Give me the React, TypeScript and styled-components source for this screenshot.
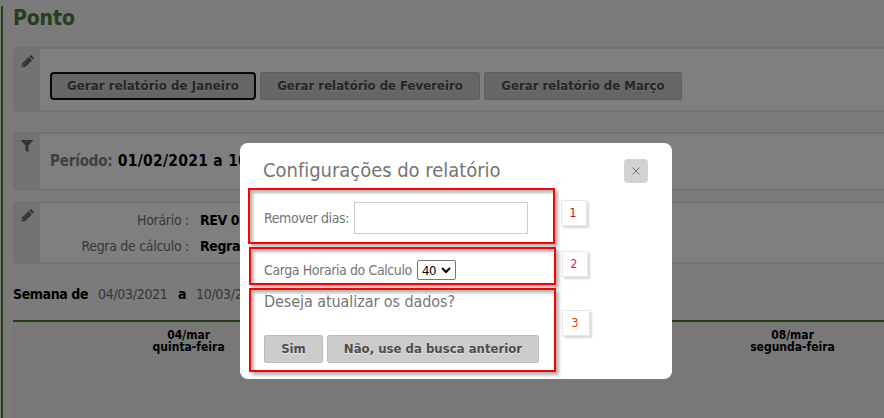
import React from 'react';
import styled, { createGlobalStyle } from 'styled-components';
import { FaFilter } from 'react-icons/fa';

const GlobalStyle = createGlobalStyle`
  * { box-sizing: border-box; }
  html, body { margin: 0; height: 100%; overflow: hidden; }
  body {
    font-family: Tahoma, "DejaVu Sans Condensed", "DejaVu Sans", sans-serif;
    font-stretch: condensed;
    background: #f6f6f6;
  }
`;

const Screen = styled.div`
  position: relative;
  width: 884px;
  height: 418px;
  overflow: hidden;
  padding: 6px 0 0 1px;
`;

const Page = styled.main`
  height: 412px;
  border-left: 2px solid #4c7c3c;
  padding-left: 10px;
`;

const Title = styled.h1`
  margin: 0;
  height: 41px;
  font-size: 21px;
  line-height: 24px;
  letter-spacing: -0.1px;
  color: #4c7c3c;
`;

const Panel = styled.section<{ $height: number; $gap: number }>`
  display: flex;
  height: ${(p) => p.$height}px;
  margin-bottom: ${(p) => p.$gap}px;
  border: 2px solid #e4e4e4;
  border-right: 0;
  border-radius: 4px 0 0 4px;
  background: #fff;
`;

const PanelSide = styled.div`
  width: 25px;
  padding: 6px 0 0 6px;
  background: #e4e4e4;
  color: #686868;
  svg { display: block; }
`;

const ButtonRow = styled.div`
  display: flex;
  gap: 4px;
  padding: 23px 0 0 10px;
`;

const Button = styled.button<{ $width: number; $focused?: boolean }>`
  width: ${(p) => p.$width}px;
  height: 28px;
  padding: 0 0 1px;
  border: ${(p) => (p.$focused ? '2px solid #101010' : '1px solid #bdbdbd')};
  border-radius: ${(p) => (p.$focused ? 4 : 2)}px;
  background: #ccc;
  color: #4d4d4d;
  font: bold 13px "DejaVu Sans Condensed", "DejaVu Sans", sans-serif;
  font-stretch: condensed;
  letter-spacing: ${(p) => (p.$focused ? 0.12 : 0.02)}px;
  text-shadow: 0 1px 0 #e6e6e6;
  white-space: nowrap;
`;

const Period = styled.div`
  padding: 16px 0 0 10px;
  font-size: 15.5px;
  line-height: 22px;
  font-weight: bold;
  white-space: nowrap;
  letter-spacing: 0.27px;
  color: #000;
  span { color: #808080; font-size: 15px; letter-spacing: -0.17px; }
`;

const Facts = styled.dl`
  display: grid;
  grid-template-columns: 149px 200px;
  column-gap: 11px;
  grid-auto-rows: 26px;
  margin: 4px 0 0;
  font-size: 14px;
  line-height: 26px;
  letter-spacing: -0.3px;
  dt { text-align: right; color: #707070; }
  dd { margin: 0; font-weight: bold; color: #000; letter-spacing: -0.4px; }
`;

const Week = styled.div`
  display: flex;
  height: 40px;
  margin-top: 16px;
  font-size: 14px;
  line-height: 28px;
  letter-spacing: -0.3px;
  color: #707070;
  white-space: nowrap;
  b { color: #000; }
  b:first-child { width: 85px; letter-spacing: -0.4px; }
  span { width: 80px; }
  b:nth-child(3) { width: 18px; }
`;

const Days = styled.div`
  display: grid;
  grid-template-columns: 75px repeat(4, 201.3px);
  height: 98px;
  padding-top: 7px;
  border-top: 2px solid #4c7c3c;
  background: #f0f0f0;
`;

const Day = styled.div`
  font-size: 12px;
  line-height: 12px;
  font-weight: bold;
  text-align: center;
  color: #000;
`;

const Overlay = styled.div`
  position: absolute;
  inset: 0;
  background: rgba(0, 0, 0, 0.5);
`;

const Dialog = styled.div`
  position: absolute;
  left: 240px;
  top: 143px;
  width: 432px;
  height: 236px;
  padding: 16px 24px 0;
  border-radius: 8px;
  background: #fff;
  color: #757575;
`;

const DialogHead = styled.header`
  display: flex;
  justify-content: space-between;
  height: 43px;
`;

const DialogTitle = styled.h2`
  margin: -1px 0 0 -1px;
  font-size: 20px;
  line-height: 24px;
  font-weight: normal;
  letter-spacing: -0.03px;
`;

const Close = styled.button`
  display: flex;
  align-items: center;
  justify-content: center;
  width: 24px;
  height: 24px;
  padding: 0;
  border: 0;
  border-radius: 4px;
  background: #d3d3d3;
`;

const Field = styled.label<{ $height: number; $gap: number }>`
  display: flex;
  align-items: center;
  gap: ${(p) => p.$gap}px;
  height: ${(p) => p.$height}px;
  font-size: 14px;
  letter-spacing: -0.4px;
  white-space: nowrap;
  span { flex: none; }
`;

const Label = styled.span<{ $width: number }>`
  width: ${(p) => p.$width}px;
`;

const TextInput = styled.input`
  width: 174px;
  height: 32px;
  border: 1px solid #ccc;
  background: #fff;
`;

const Select = styled.div`
  display: flex;
  align-items: center;
  justify-content: space-between;
  width: 39px;
  height: 20px;
  padding: 0 4px;
  border: 1px solid #767676;
  border-radius: 2px;
  font-size: 13px;
  color: #000;
`;

const Question = styled.p`
  margin: -14px 0 0;
  height: 43px;
  font-size: 16px;
  line-height: 20px;
  letter-spacing: -0.07px;
`;

const Actions = styled.div`
  display: flex;
  gap: 4px;
`;

const Highlight = styled.div<{ $x: number; $y: number; $height: number }>`
  position: absolute;
  left: ${(p) => p.$x}px;
  top: ${(p) => p.$y}px;
  width: 307px;
  height: ${(p) => p.$height}px;
  border: 2px solid #f00;
  box-shadow: 3px 3px 3px rgba(0, 0, 0, 0.3), inset 3px 3px 3px rgba(0, 0, 0, 0.28);
`;

const Marker = styled.div<{ $x: number; $y: number; $width?: number; $color: string }>`
  position: absolute;
  left: ${(p) => p.$x}px;
  top: ${(p) => p.$y}px;
  width: ${(p) => p.$width ?? 26}px;
  height: 26px;
  padding-right: 2px;
  border: 1px solid #e8e8e8;
  background: #fff;
  box-shadow: 2px 2px 2px #d8d8d8;
  color: ${(p) => p.$color};
  font-size: 12px;
  line-height: 24px;
  text-align: center;
`;

const Pencil = () => (
  <svg width="13" height="13" viewBox="0 0 13 13" fill="currentColor">
    <path d="M7.6 1.9 11 5.3 4.3 12 .9 12.3Q.5 12.3.6 11.8L1 8.5Z" />
    <path d="M8.3 1.2 9 .5Q9.8-.1 10.6.6L12.3 2.3Q13 3.1 12.4 3.9L11.7 4.6Z" />
    <path d="M3.2 8.7 7.6 4.3" stroke="#aaa" strokeWidth="0.7" />
    <path d="M1.8 9.6 3.3 11.1 2.3 11.3 1.6 10.6Z" fill="#c8c8c8" />
  </svg>
);

export default function App() {
  return (
    <>
      <GlobalStyle />
      <Screen>
        <Page>
          <Title>Ponto</Title>
          <Panel $height={65} $gap={20}>
            <PanelSide><Pencil /></PanelSide>
            <ButtonRow>
              <Button $width={206} $focused>Gerar relatório de Janeiro</Button>
              <Button $width={220}>Gerar relatório de Fevereiro</Button>
              <Button $width={198}>Gerar relatório de Março</Button>
            </ButtonRow>
          </Panel>
          <Panel $height={59} $gap={10}>
            <PanelSide><FaFilter size={12} /></PanelSide>
            <Period><span>Período:</span> 01/02/2021 a 10/03/2021</Period>
          </Panel>
          <Panel $height={63} $gap={0}>
            <PanelSide><Pencil /></PanelSide>
            <Facts>
              <dt>Horário :</dt><dd>REV 08:00</dd>
              <dt>Regra de cálculo :</dt><dd>Regra</dd>
            </Facts>
          </Panel>
          <Week>
            <b>Semana de</b><span>04/03/2021</span><b>a</b><span>10/03/2021</span>
          </Week>
          <Days>
            <div />
            <Day>04/mar<br />quinta-feira</Day>
            <div />
            <div />
            <Day>08/mar<br />segunda-feira</Day>
          </Days>
        </Page>
        <Overlay />
        <Dialog>
          <DialogHead>
            <DialogTitle>Configurações do relatório</DialogTitle>
            <Close aria-label="Fechar">
              <svg width="8" height="8" viewBox="0 0 8 8">
                <path d="m.5.5 7 7m0-7-7 7" stroke="#707070" />
              </svg>
            </Close>
          </DialogHead>
          <Field $height={32} $gap={4}>
            <Label $width={86}>Remover dias:</Label>
            <TextInput />
          </Field>
          <Field $height={72} $gap={4}>
            <Label $width={149}>Carga Horaria do Calculo</Label>
            <Select>
              40
              <svg width="10" height="7" viewBox="0 0 10 7">
                <path d="m1 1 4 4 4-4" fill="none" stroke="#000" strokeWidth="2" />
              </svg>
            </Select>
          </Field>
          <Question>Deseja atualizar os dados?</Question>
          <Actions>
            <Button $width={59}>Sim</Button>
            <Button $width={212}>Não, use da busca anterior</Button>
          </Actions>
        </Dialog>
        <Highlight $x={248} $y={188} $height={56} />
        <Highlight $x={249} $y={247} $height={38} />
        <Highlight $x={249} $y={288} $height={84} />
        <Marker $x={561} $y={200} $color="#d00018">1</Marker>
        <Marker $x={562} $y={251} $color="#f0103c">2</Marker>
        <Marker $x={562} $y={310} $width={28} $color="#ff2800">3</Marker>
      </Screen>
    </>
  );
}
